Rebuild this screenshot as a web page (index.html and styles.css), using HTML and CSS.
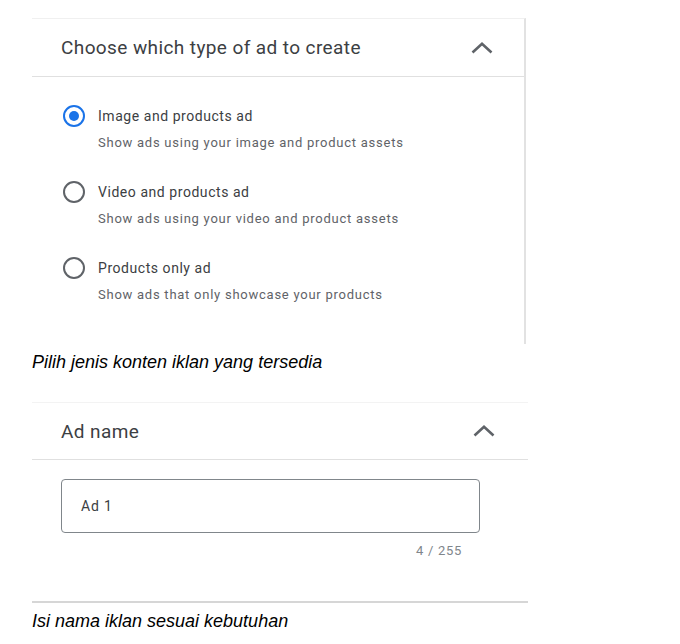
FILE: index.html
```html
<!DOCTYPE html>
<html lang="en">
  <head>
    <meta charset="utf-8" />
    <title>Create ad</title>
    <link rel="stylesheet" href="styles.css">
  </head>
  <body>
    <div class="page">
      <div class="panel panel-type">
        <div class="panel-head">
          <h2>Choose which type of ad to create</h2>
          <svg class="chevron" width="22" height="12" viewBox="0 0 22 12">
            <polyline points="1.5,10.5 11,1.8 20.5,10.5" />
          </svg>
        </div>
        <div class="options">
          <label class="option">
            <span class="radio checked"></span>
            <span class="option-text">
              <span class="option-title">Image and products ad</span>
              <span class="option-sub">Show ads using your image and product assets</span>
            </span>
          </label>
          <label class="option">
            <span class="radio"></span>
            <span class="option-text">
              <span class="option-title">Video and products ad</span>
              <span class="option-sub">Show ads using your video and product assets</span>
            </span>
          </label>
          <label class="option">
            <span class="radio"></span>
            <span class="option-text">
              <span class="option-title">Products only ad</span>
              <span class="option-sub">Show ads that only showcase your products</span>
            </span>
          </label>
        </div>
      </div>
      <p class="caption">Pilih jenis konten iklan yang tersedia</p>

      <div class="panel panel-name">
        <div class="panel-head">
          <h2>Ad name</h2>
          <svg class="chevron" width="22" height="12" viewBox="0 0 22 12">
            <polyline points="1.5,10.5 11,1.8 20.5,10.5" />
          </svg>
        </div>
        <div class="name-field">
          <div class="text-input">Ad 1</div>
          <div class="counter">4 / 255</div>
        </div>
      </div>
      <p class="caption">Isi nama iklan sesuai kebutuhan</p>
    </div>
  </body>
</html>
```

FILE: styles.css
```css
body {
  margin: 0;
  background: #fff;
  font-family: Roboto, "Liberation Sans", Arial, sans-serif;
  color: #3c4043;
}

.page {
  padding: 18px 0 0 32px;
}

.panel {
  background: #fff;
}
.panel-type {
  width: 492px;
  border-top: 1px solid #f0f0f0;
  border-right: 2px solid #e2e2e2;
}
.panel-name {
  width: 496px;
  margin-top: 30px;
  border-top: 1px solid #f3f3f3;
  border-bottom: 2px solid #d6d6d6;
}

.panel-head {
  display: flex;
  align-items: center;
  justify-content: space-between;
  height: 57px;
  padding: 0 31px 0 29px;
  border-bottom: 1px solid #e0e0e0;
}
.panel-name .panel-head {
  height: 56px;
  padding-right: 33px;
}
.panel-head h2 {
  margin: 0;
  font-size: 19px;
  font-weight: 400;
  letter-spacing: 0.4px;
  color: #3c4043;
}
.chevron {
  fill: none;
  stroke: #5f6368;
  stroke-width: 2.6;
}

.options {
  display: flex;
  flex-direction: column;
  gap: 29px;
  padding: 29px 0 39px 31px;
}
.option {
  display: flex;
  gap: 13px;
}
.radio {
  width: 18px;
  height: 18px;
  border: 2px solid #5f6368;
  border-radius: 50%;
  margin-top: -1px;
  flex: none;
  position: relative;
}
.radio.checked {
  border-color: #1a73e8;
}
.radio.checked::after {
  content: "";
  position: absolute;
  left: 4px;
  top: 4px;
  width: 10px;
  height: 10px;
  border-radius: 50%;
  background: #1a73e8;
}
.option-text {
  display: flex;
  flex-direction: column;
  gap: 7px;
}
.option-title {
  font-size: 14px;
  line-height: 20px;
  letter-spacing: 0.55px;
  color: #3c4043;
}
.option-sub {
  font-size: 13px;
  line-height: 20px;
  letter-spacing: 0.75px;
  color: #5f6368;
}

.name-field {
  padding: 19px 0 41px 29px;
}
.text-input {
  width: 398px;
  height: 52px;
  padding-left: 19px;
  border: 1px solid #80868b;
  border-radius: 4px;
  font-size: 14px;
  line-height: 52px;
  letter-spacing: 0.8px;
  color: #3c4043;
}
.counter {
  width: 401px;
  margin-top: 9px;
  text-align: right;
  font-size: 13px;
  line-height: 18px;
  letter-spacing: 0.7px;
  color: #80868b;
}

.caption {
  margin: 8px 0 0;
  font-family: "Liberation Sans", Arial, sans-serif;
  font-style: italic;
  font-size: 18px;
  line-height: 20px;
  color: #000;
}
```
